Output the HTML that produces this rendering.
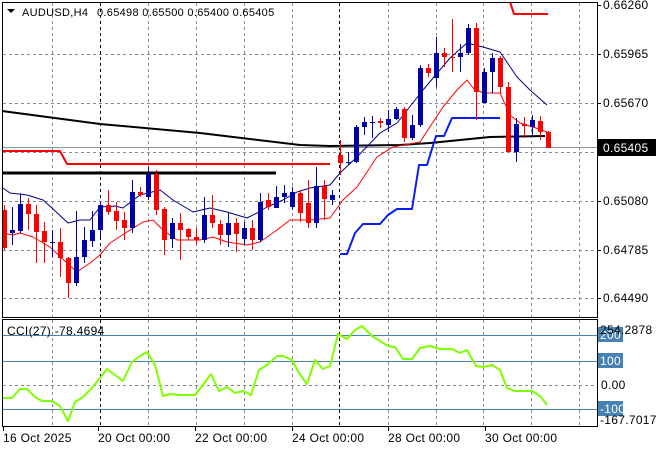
<!DOCTYPE html>
<html><head><meta charset="utf-8"><style>
html,body{margin:0;padding:0;background:#fff;width:660px;height:450px;overflow:hidden}
svg{display:block;font-family:"Liberation Sans",sans-serif;font-size:12px;letter-spacing:0.3px}
</style></head><body>
<svg id="s" width="660" height="450" xmlns="http://www.w3.org/2000/svg">
<rect width="660" height="450" fill="#fff"/>
<g id="grid"></g>
<g id="lines"></g>
<g id="candles"></g>
<g id="over"></g>
</svg>
<script>
var NS="http://www.w3.org/2000/svg",s=document.getElementById('s');
function el(p,t,a,txt){var e=document.createElementNS(NS,t);for(var k in a)e.setAttribute(k,a[k]);if(txt!=null)e.textContent=txt;document.getElementById(p).appendChild(e);return e;}
var vx=[52,148,196,244,292,388,436,483,531,579];
vx.forEach(function(x){el('grid','line',{x1:x+.5,y1:3,x2:x+.5,y2:317,stroke:'#7f8a96','stroke-dasharray':'3,3'});el('grid','line',{x1:x+.5,y1:320,x2:x+.5,y2:426,stroke:'#7f8a96','stroke-dasharray':'3,3'});});
[100,339].forEach(function(x){el('grid','line',{x1:x+.5,y1:3,x2:x+.5,y2:317,stroke:'#000','stroke-dasharray':'3,3'});el('grid','line',{x1:x+.5,y1:320,x2:x+.5,y2:426,stroke:'#000','stroke-dasharray':'3,3'});});
[54,103,152,201,250,298].forEach(function(y){el('grid','line',{x1:3,y1:y+.5,x2:597,y2:y+.5,stroke:'#7f8a96','stroke-dasharray':'3,3'});});
[335,361,409].forEach(function(y){el('grid','line',{x1:3,y1:y+.5,x2:597,y2:y+.5,stroke:'#4682b4'});});
el('grid','line',{x1:3,y1:385.5,x2:597,y2:385.5,stroke:'#7f8a96','stroke-dasharray':'3,3'});
el('grid','line',{x1:3,y1:147.5,x2:597,y2:147.5,stroke:'#8a96a0'});
function pl(pts,c,w){el('lines','polyline',{points:pts,fill:'none',stroke:c,'stroke-width':w,'stroke-linejoin':'round'});}
pl("2,111 100,124 200,133 300,145 330,146 400,145 430,143 490,137 545,136","#000",2);
pl("3,151 60,151 67,164 330,164","#f00",2);
pl("510,2 514,14 548,14","#f00",2);
pl("3,173 276,173","#000",3);
pl("340,254 347,254 355,233 363,224 380,224 388,215 397,209 412,209 419,165 427,165 436,136 444,136 452,118 500,118","#0a1ef0",2);
pl("3,188 10,193 27,195 43,200 53,209 68,223 80,220 90,220 100,207 115,206 123,208 140,195 148,193 160,190 173,200 193,212 210,208 227,212 247,218 257,213 267,207 283,200 297,192 310,188 330,185 340,173 357,157 380,133 397,123 423,90 450,58 467,43 483,47 500,52 517,77 530,90 547,105","#000080",1);
pl("3,233 13,235 20,233 33,237 50,247 67,263 77,272 90,263 100,255 110,243 127,232 143,222 153,220 163,230 177,240 200,240 213,237 227,242 247,245 260,242 277,230 290,220 310,220 330,218 343,200 357,187 377,157 393,147 420,142 443,107 457,90 467,80 473,88 483,93 500,93 510,115 520,123 533,127 547,132","#f00",1);
pl("3,398 12,398 20,389 27,389 35,397 42,401 52,401 60,406 68,421 75,402 83,397 92,388 100,378 107,369 115,375 123,381 132,362 140,356 147,352 155,365 163,396 170,394 180,395 195,395 203,385 211,374 219,391 227,387 235,393 243,391 251,395 259,370 267,365 277,356 283,356 292,360 299,373 307,384 315,360 323,369 330,366 338,334 347,339 355,330 362,326 372,336 380,341 388,346 395,347 403,359 412,359 420,348 430,346 440,349 452,349 460,353 467,350 476,366 483,367 492,365 500,370 507,388 515,391 527,391 532,391 540,396 547,405","#7fff00",2);
var C=[
['r',210,248,205,250],['b',230,233,207,245],['b',204,231,193,233],['r',204,214,198,230],['r',214,232,205,263],['r',231,242,222,263],['b',242,243,230,257],['r',242,258,228,277],['r',258,283,257,298],['b',257,283,211,286],
['b',240,257,227,263],['b',230,241,211,247],['b',205,230,202,237],['r',205,212,190,215],['r',211,221,202,230],['r',220,228,212,240],['b',192,228,180,233],['r',192,195,187,197],['b',174,197,167,200],['r',174,210,170,215],
['r',209,240,207,255],['b',223,239,218,248],['r',223,230,213,260],['r',229,237,228,240],['r',237,240,228,245],['b',215,240,197,243],['r',215,223,195,228],['r',224,235,220,245],['b',223,235,213,247],['r',223,234,218,252],
['b',228,239,222,245],['r',228,240,220,250],['b',202,240,193,242],['r',200,207,193,210],['b',197,208,186,208],['b',193,197,185,203],['b',192,207,187,210],['r',193,213,190,222],['r',203,223,180,228],['b',186,223,167,228],
['r',186,199,180,220],['b',195,200,190,205],['r',155,163,140,175],['b',162,163,152,165],['b',127,162,125,163],['b',122,127,117,135],['b',122,123,116,138],['r',121,123,118,128],['b',119,125,110,132],['b',109,119,107,120],
['r',109,138,107,142],['b',125,138,115,140],['b',68,125,65,127],['r',68,73,64,77],['b',53,78,37,87],['r',53,57,48,67],['r',57,58,19,72],['b',53,57,44,72],['b',28,53,24,55],['r',28,92,23,120],
['b',72,103,68,103],['b',58,72,53,93],['r',58,87,56,93],['r',87,152,82,152],['b',124,152,118,162],['r',124,126,117,138],['b',120,127,115,137],['r',121,132,116,140],['r',132,148,131,148]];
C.forEach(function(c,i){var x=4+8*i,col=c[0]=='r'?'#f00':'#0000a8';
el('candles','line',{x1:x+.5,y1:c[3],x2:x+.5,y2:c[4],stroke:col});
el('candles','rect',{x:x-2,y:c[1],width:5,height:Math.max(1,c[2]-c[1]),fill:col});});
var o='over';
el(o,'rect',{x:2.5,y:2.5,width:595,height:315,fill:'none',stroke:'#000'});
el(o,'rect',{x:2.5,y:319.5,width:595,height:107,fill:'none',stroke:'#000'});
[[5,'0.66260'],[54,'0.65965'],[103,'0.65670'],[152,'0.65375'],[201,'0.65080'],[250,'0.64785'],[298,'0.64490']].forEach(function(p){el(o,'line',{x1:597,y1:p[0]+.5,x2:601,y2:p[0]+.5,stroke:'#000'});el(o,'text',{x:603,y:p[0]+4,fill:'#000'},p[1]);});
el(o,'rect',{x:598,y:139,width:58,height:17,fill:'#000'});
el(o,'text',{x:603,y:152,fill:'#fff'},'0.65405');
el(o,'text',{x:22,y:16,fill:'#000','font-size':'11px'},'AUDUSD,H4');
el(o,'text',{x:97,y:16,fill:'#000','font-size':'11px'},'0.65498 0.65500 0.65400 0.65405');
el(o,'path',{d:'M7 9 L15 9 L11 13 Z',fill:'#000'});
el(o,'text',{x:7,y:335,fill:'#000'},'CCI(27) -78.4694');
[[327,'200'],[353,'100'],[401,'-100']].forEach(function(p){el(o,'rect',{x:598,y:p[0],width:25,height:15,fill:'#4682b4'});el(o,'text',{x:600,y:p[0]+12,fill:'#fff'},p[1]);});
el(o,'text',{x:601,y:389,fill:'#000'},'0.00');
el(o,'text',{x:600,y:334,fill:'#000'},'254.2878');
el(o,'text',{x:600,y:424,fill:'#000'},'-167.7017');
[[3,'16 Oct 2025'],[98,'20 Oct 00:00'],[195,'22 Oct 00:00'],[292,'24 Oct 00:00'],[388,'28 Oct 00:00'],[485,'30 Oct 00:00']].forEach(function(p){el(o,'line',{x1:p[0]+.5,y1:426,x2:p[0]+.5,y2:431,stroke:'#000'});el(o,'text',{x:p[0],y:442,fill:'#000'},p[1]);});
</script>
</body></html>
